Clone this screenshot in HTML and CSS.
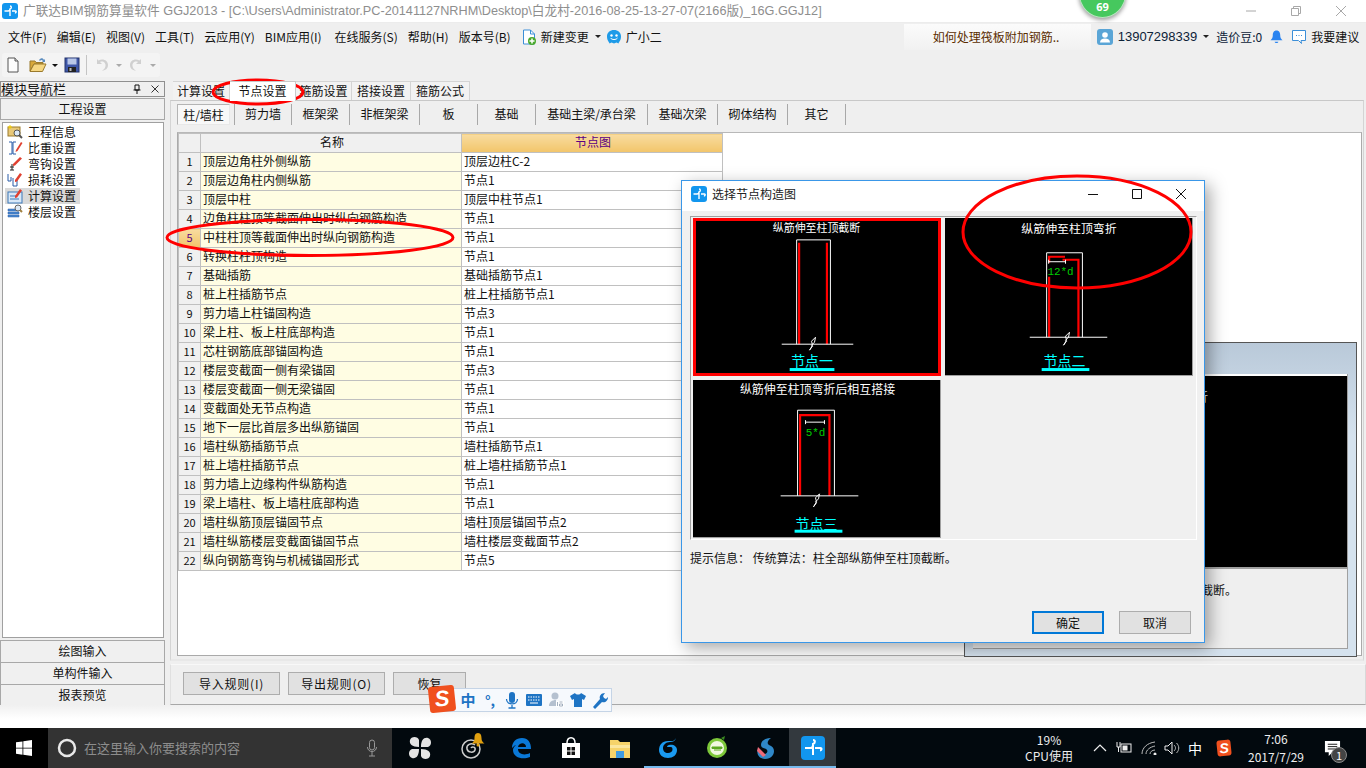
FILE: index.html
```html
<!DOCTYPE html>
<html lang="zh">
<head>
<meta charset="utf-8">
<title>广联达BIM钢筋算量软件</title>
<link rel="stylesheet" href="styles.css">
</head>
<body>
<div class="app">
  <header class="titlebar">
    <svg class="applogo" viewBox="0 0 16 16"><rect width="16" height="16" rx="3" fill="#1296ee"/><path d="M8 3c1.800 0 1.800 2.500 0 3v7M2.500 8H6c1.200 0 2-1 2-2.200M10 8h3.500c1 0 1 2-.6 2" fill="none" stroke="#fff" stroke-width="1.400"/></svg>
    <span class="apptitle">广联达BIM钢筋算量软件 GGJ2013 - [C:\Users\Administrator.PC-20141127NRHM\Desktop\白龙村-2016-08-25-13-27-07(2166版)_16G.GGJ12]</span>
    <div class="winctl">
      <svg viewBox="0 0 12 12"><path d="M1 6h10" stroke="#a8a8a8"/></svg>
      <svg viewBox="0 0 12 12"><path d="M1.500 3.500h7v7h-7zM3.500 3.500v-2h7v7h-2" fill="none" stroke="#a8a8a8"/></svg>
      <svg viewBox="0 0 12 12"><path d="M1 1l10 10M11 1L1 11" stroke="#a8a8a8"/></svg>
    </div>
  </header>

  <nav class="menubar">
    <span>文件(F)</span><span>编辑(E)</span><span>视图(V)</span><span>工具(T)</span><span>云应用(Y)</span><span class="bim">BIM应用(I)</span><span>在线服务(S)</span><span>帮助(H)</span><span>版本号(B)</span>
    <span class="menuicon">
      <svg class="ic16" viewBox="0 0 16 16"><path d="M2.500 1h7l4 4v10h-11z" fill="#fff" stroke="#3c8fd8"/><path d="M9.500 1v4h4" fill="none" stroke="#3c8fd8"/><circle cx="11" cy="12" r="4" fill="#49a82c"/><path d="M11 9.500v5M8.500 12h5" stroke="#fff" stroke-width="1.500"/></svg>
      新建变更<i class="caret tight"></i>
    </span>
    <span class="menuicon xiao">
      <svg class="ic16" viewBox="0 0 16 16"><path d="M8 1c4 0 7 2.500 7 6.500 0 4-2 5-2.500 7l-2-1-2.500 1-2.500-1-2 1C3 12.500 1 11.500 1 7.500 1 3.500 4 1 8 1z" fill="#1e9be8"/><circle cx="5.500" cy="6.500" r="1.200" fill="#fff"/><circle cx="10.500" cy="6.500" r="1.200" fill="#fff"/><path d="M4.500 9c1.500 2 5.500 2 7 0" fill="none" stroke="#fff"/></svg>
      广小二
    </span>
    <div class="newsbox">如何处理筏板附加钢筋..</div>
    <div class="userbox">
      <svg class="ic16" viewBox="0 0 16 16"><rect width="16" height="16" rx="3" fill="#5aa5d6"/><circle cx="8" cy="6" r="2.800" fill="#fff"/><path d="M3 13.500c0-2.500 2-4 5-4s5 1.500 5 4z" fill="#fff"/></svg>
      <span class="phone">13907298339</span><i class="caret"></i>
      <span class="beans">造价豆:0</span>
      <svg class="bell" viewBox="0 0 14 16"><path d="M7 1c3 0 4 2.500 4 5 0 3 1 4 2.500 5.500H.5C2 10 3 9 3 6c0-2.500 1-5 4-5z" fill="#2a84f0"/><path d="M5 13h4c0 2-4 2-4 0z" fill="#2a84f0"/></svg>
      <svg class="ic16 chat" viewBox="0 0 16 16"><path d="M1.500 1.500h13v10H10l.5 3-3-3h-6z" fill="#fff" stroke="#3c8fd8"/><path d="M5 6.500h1M7.500 6.500h1M10 6.500h1" stroke="#3c8fd8"/></svg>
      <span>我要建议</span>
    </div>
  </nav>

  <div class="toolbar">
    <div class="toolgroup">
      <svg class="ic16" viewBox="0 0 16 16"><path d="M3 1h7l3 3v11H3z" fill="#fdfdfd" stroke="#555"/><path d="M10 1v3h3" fill="#ddd" stroke="#555"/></svg>
      <svg class="ic18" viewBox="0 0 18 16"><path d="M1 14V4h5l1 1.500h7V7H5l-4 7z" fill="#d9a93a" stroke="#9a7a2c"/><path d="M1 14.500L5 7h12l-3.500 7.500z" fill="#f6d782" stroke="#9a7a2c"/><path d="M10 3c2-2.500 4-2 5 0l1-1v3h-3l1-1c-1-1-2-1.500-3 0z" fill="#5c8dbf"/></svg>
      <i class="caret dark"></i>
      <svg class="ic16 save" viewBox="0 0 16 16"><rect x="1" y="1" width="14" height="14" fill="#3f57a8" stroke="#23336b"/><rect x="3.500" y="1.500" width="9" height="6" fill="#b9c7e8"/><rect x="4" y="10" width="8" height="5" fill="#222"/><rect x="5.500" y="11" width="2" height="3" fill="#bbb"/></svg>
      <i class="vsep"></i>
      <svg class="ic16" viewBox="0 0 16 16"><path d="M3 2v5h5L6 5c3-1.500 6 1 5.500 4-.3 2-1.500 3.500-3.500 4.500 4 0 6-2.500 6-5.500 0-4.500-5-7-9.500-4.500z" fill="#d0d0d0"/></svg>
      <i class="caret mute"></i>
      <svg class="ic16" viewBox="0 0 16 16"><path d="M13 2v5H8l2-2C7 3.500 4 6 4.500 9c.3 2 1.500 3.500 3.500 4.500-4 0-6-2.500-6-5.500 0-4.500 5-7 9.500-4.500z" fill="#d0d0d0"/></svg>
      <i class="caret mute"></i>
    </div>
  </div>

  <main class="workspace">
    <aside class="sidebar">
      <div class="navhead"><span>模块导航栏</span>
        <span class="navctl">
          <svg viewBox="0 0 10 10"><path d="M3 1h4v5H3zM1.500 6h7M5 6v4" fill="none" stroke="#111"/></svg>
          <svg viewBox="0 0 10 10"><path d="M1.500 1.500l7 7M8.500 1.500l-7 7" stroke="#333"/></svg>
        </span>
      </div>
      <div class="navbtn first">工程设置</div>
      <ul class="navlist">
        <li><svg class="ic16" viewBox="0 0 16 16"><rect x="1" y="3" width="12" height="9" fill="#e8c878" stroke="#9a7a2c"/><path d="M3 1v4M1 3h4" stroke="#f4d000"/><circle cx="10" cy="9" r="3" fill="#dbe8f5" stroke="#555"/><path d="M12 11l3 3" stroke="#555" stroke-width="2"/></svg>工程信息</li>
        <li><svg class="ic16" viewBox="0 0 16 16"><path d="M2 2h3v12H2M9 2H6v12h3" fill="none" stroke="#2a5da8"/><path d="M9 10l5-8 1.500 1-5 8-2 1z" fill="#e04030"/></svg>比重设置</li>
        <li><svg class="ic16" viewBox="0 0 16 16"><path d="M5 8v6M3 14h4M3 11h4" stroke="#222"/><path d="M6 8l7-7 2 1.500-7 7-2 .5z" fill="#e04030"/></svg>弯钩设置</li>
        <li><svg class="ic16" viewBox="0 0 16 16"><path d="M1 2v7h3V5M6 6v8h4v-6" fill="none" stroke="#2a5da8"/><path d="M8 8l5-7 2 1.500-5 7-2 .5z" fill="#e04030"/></svg>损耗设置</li>
        <li class="sel"><svg class="ic16" viewBox="0 0 16 16"><rect x="1" y="4" width="14" height="11" fill="#d8e8f8" stroke="#3c78b8"/><path d="M3 8h6M3 11h9" stroke="#3c78b8"/><path d="M8 8l5-7 2 1.500-5 7-2 .5z" fill="#e04030"/></svg>计算设置</li>
        <li><svg class="ic16" viewBox="0 0 16 16"><path d="M1 5h11v2H1zM1 8h11v2H1zM1 11h11v2H1z" fill="#4a88d0" stroke="#2a5da8" stroke-width=".5"/><circle cx="11" cy="4" r="3" fill="#dce8f5" stroke="#666"/><path d="M13 6l2 2" stroke="#a08040" stroke-width="2"/></svg>楼层设置</li>
      </ul>
      <div class="navbtn">绘图输入</div>
      <div class="navbtn">单构件输入</div>
      <div class="navbtn">报表预览</div>
    </aside>

    <section class="content">
      <div class="tabs">
        <span class="tab w1">计算设置</span><span class="tab on w2">节点设置</span><span class="tab w3">箍筋设置</span><span class="tab w4">搭接设置</span><span class="tab w5">箍筋公式</span>
      </div>
      <div class="tabpanel">
        <div class="subtabs">
          <span class="stab pressed w53">柱/墙柱</span><span class="stab w58 lead">剪力墙</span><span class="stab w58">框架梁</span><span class="stab w70">非框架梁</span><span class="stab w58">板</span><span class="stab w58">基础</span><span class="stab w112">基础主梁/承台梁</span><span class="stab w70">基础次梁</span><span class="stab w70">砌体结构</span><span class="stab w58">其它</span>
        </div>
        <div class="gridbox">
          <table class="grid">
            <colgroup><col class="c0"><col class="c1"><col class="c2"></colgroup>
            <thead><tr><th class="idx"></th><th>名称</th><th class="hot">节点图</th></tr></thead>
            <tbody>
              <tr><td class="idx">1</td><td class="nm">顶层边角柱外侧纵筋</td><td>顶层边柱C-2</td></tr>
              <tr><td class="idx">2</td><td class="nm">顶层边角柱内侧纵筋</td><td>节点1</td></tr>
              <tr><td class="idx">3</td><td class="nm">顶层中柱</td><td>顶层中柱节点1</td></tr>
              <tr><td class="idx">4</td><td class="nm">边角柱柱顶等截面伸出时纵向钢筋构造</td><td>节点1</td></tr>
              <tr><td class="idx cur">5</td><td class="nm">中柱柱顶等截面伸出时纵向钢筋构造</td><td>节点1</td></tr>
              <tr><td class="idx">6</td><td class="nm">转换柱柱顶构造</td><td>节点1</td></tr>
              <tr><td class="idx">7</td><td class="nm">基础插筋</td><td>基础插筋节点1</td></tr>
              <tr><td class="idx">8</td><td class="nm">桩上柱插筋节点</td><td>桩上柱插筋节点1</td></tr>
              <tr><td class="idx">9</td><td class="nm">剪力墙上柱锚固构造</td><td>节点3</td></tr>
              <tr><td class="idx">10</td><td class="nm">梁上柱、板上柱底部构造</td><td>节点1</td></tr>
              <tr><td class="idx">11</td><td class="nm">芯柱钢筋底部锚固构造</td><td>节点1</td></tr>
              <tr><td class="idx">12</td><td class="nm">楼层变截面一侧有梁锚固</td><td>节点3</td></tr>
              <tr><td class="idx">13</td><td class="nm">楼层变截面一侧无梁锚固</td><td>节点1</td></tr>
              <tr><td class="idx">14</td><td class="nm">变截面处无节点构造</td><td>节点1</td></tr>
              <tr><td class="idx">15</td><td class="nm">地下一层比首层多出纵筋锚固</td><td>节点1</td></tr>
              <tr><td class="idx">16</td><td class="nm">墙柱纵筋插筋节点</td><td>墙柱插筋节点1</td></tr>
              <tr><td class="idx">17</td><td class="nm">桩上墙柱插筋节点</td><td>桩上墙柱插筋节点1</td></tr>
              <tr><td class="idx">18</td><td class="nm">剪力墙上边缘构件纵筋构造</td><td>节点1</td></tr>
              <tr><td class="idx">19</td><td class="nm">梁上墙柱、板上墙柱底部构造</td><td>节点1</td></tr>
              <tr><td class="idx">20</td><td class="nm">墙柱纵筋顶层锚固节点</td><td>墙柱顶层锚固节点2</td></tr>
              <tr><td class="idx">21</td><td class="nm">墙柱纵筋楼层变截面锚固节点</td><td>墙柱楼层变截面节点2</td></tr>
              <tr><td class="idx">22</td><td class="nm">纵向钢筋弯钩与机械锚固形式</td><td>节点5</td></tr>
            </tbody>
          </table>
        </div>
      </div>
      <div class="actions">
        <button class="btn b97">导入规则(I)</button><button class="btn b97">导出规则(O)</button><button class="btn b73">恢复</button>
      </div>
    </section>
  </main>
  <div class="gap"></div>

  <footer class="taskbar">
    <div class="start"><svg viewBox="0 0 16 16"><path d="M0 2.300l6.500-.9v6.300H0zM7.300 1.300L16 0v7.700H7.300zM0 8.500h6.500v6.200L0 13.800zM7.300 8.500H16V16l-8.700-1.200z" fill="#fff"/></svg></div>
    <div class="search">
      <svg class="cortana" viewBox="0 0 20 20"><circle cx="10" cy="10" r="8" fill="none" stroke="#e8e8e8" stroke-width="2.500"/></svg>
      <span class="stext">在这里输入你要搜索的内容</span>
      <svg class="mic" viewBox="0 0 12 18"><rect x="3.500" y="1" width="5" height="10" rx="2.500" fill="none" stroke="#999"/><path d="M1.500 8c0 6 9 6 9 0M6 13v4M3 17h6" fill="none" stroke="#999"/></svg>
    </div>
    <div class="apps">
      <span class="tb w51"><svg viewBox="0 0 24 24"><path d="M11 11C4 11 1 8 2 4s8-4 9 0zM13 11c0-7 3-10 7-9s4 8 0 9zM13 13c7 0 10 3 9 7s-8 4-9 0zM11 13c0 7-3 10-7 9s-4-8 0-9z" fill="#e4e4e4"/></svg></span>
      <span class="tb w51 rel"><svg viewBox="0 0 24 24"><circle cx="12" cy="13" r="9" fill="none" stroke="#ccc" stroke-width="1.500"/><path d="M16 9c-4-3-9 0-8 4s7 4 8 1-3-4-4-2" fill="none" stroke="#ccc" stroke-width="1.500"/></svg><svg class="minibell" viewBox="0 0 14 14"><path d="M7 0c3 0 3.500 3 3.500 5 0 3 1 4 3 5.500H.5C2.500 9 3.500 8 3.500 5 3.500 3 4 0 7 0z" fill="#e0a010"/><circle cx="7" cy="12" r="1.500" fill="#e0a010"/></svg></span>
      <span class="tb w50"><svg viewBox="0 0 24 24"><path d="M3 12C3 6 7 2 13 2c6 0 9 4.500 9 11H9c0 5 6 7 12 4v4c-7 3-17 1-17-7 0-2 1-3 3-5-1 0-2 1-4 3zm6-1h8c0-5-7-5-8 0z" fill="#0a78d7"/></svg></span>
      <span class="tb w50"><svg viewBox="0 0 24 24"><path d="M3 7h18v15H3z" fill="#fff"/><path d="M8 7c0-7 8-7 8 0" fill="none" stroke="#fff" stroke-width="1.500"/><path d="M8 11h3.500v3.500H8zM12.500 11H16v3.500h-3.500zM8 15.500h3.500V19H8zM12.500 15.500H16V19h-3.500z" fill="#111"/></svg></span>
      <span class="tb w48"><svg viewBox="0 0 24 24"><path d="M2 4h8l2 2h10v16H2z" fill="#f6d36a"/><path d="M2 9h20v3H2z" fill="#fbe69e"/><path d="M8 15h8v7H8z" fill="#3f9be0"/></svg></span>
      <span class="tb w48 open"><svg viewBox="0 0 24 24"><path d="M20 2c-2 4-4 3-8 3C6 5 3 9 3 14c0 5 4 8 9 8s9-3 9-8c0-4-4-6-8-5-1 .3-2 1-2 2h4c1 0 1.500 1 1.500 2.500 0 2-2 3.500-4.500 3.500-3 0-5-2-5-5 0-3 3-6 7-6 3 0 5-1 6-4z" fill="#1a9af0"/></svg></span>
      <span class="tb w49 open"><svg viewBox="0 0 24 24"><circle cx="12" cy="12" r="10" fill="#7dc83a"/><circle cx="12" cy="12" r="7" fill="#f0f8e0"/><path d="M7 11h10v1.500H7zM9 14h7" stroke="#5aa820" fill="#5aa820"/><path d="M16 2l4-2-1 4z" fill="#3a8a20"/></svg></span>
      <span class="tb w48 open"><svg viewBox="0 0 24 24"><path d="M18 2c-6 0-10 3-10 7 0 3 3 3 5 4s2 4-1 5c-3 1-6 0-7-5-2 5 1 10 7 10s9-4 9-8c0-3-2-5-5-6-2-1-2-4 2-7z" fill="#2f88c8"/><path d="M5 11l8 8-3 2-6-6z" fill="#ee6a78"/></svg></span>
      <span class="tb w47 open act"><svg viewBox="0 0 24 24"><rect width="24" height="24" rx="4" fill="#1296ee"/><path d="M12 4c2.500 0 2.500 3 0 4v11M4 12h5.500c1.500 0 2.500-1.500 2.500-3M14 12h5.500c1.500 0 1.500 2.500-.5 2.500" fill="none" stroke="#fff" stroke-width="2"/></svg></span>
    </div>
    <div class="tray">
      <div class="cpu"><span>19%</span><span>CPU使用</span></div>
      <svg class="t t1" viewBox="0 0 14 14"><path d="M1 10l6-6 6 6" fill="none" stroke="#eee" stroke-width="1.200"/></svg>
      <svg class="t t2" viewBox="0 0 16 14"><rect x="5" y="3" width="10" height="8" fill="none" stroke="#eee"/><rect x="6.500" y="4.500" width="5" height="5" fill="#eee"/><path d="M1 1v5h3V1M2.500 6v5" fill="none" stroke="#eee"/></svg>
      <svg class="t t3" viewBox="0 0 16 14"><path d="M1 13C1 7 6 2 14 1M5 13c0-4 4-7 9-8M9 13c0-2 2-4 5-4" fill="none" stroke="#bbb"/><circle cx="14" cy="13" r="1.500" fill="#eee"/></svg>
      <svg class="t t4" viewBox="0 0 16 14"><path d="M1 5h3l4-4v12l-4-4H1z" fill="none" stroke="#eee"/><path d="M10 4c2 2 2 4 0 6M12.500 2c3 3 3 7 0 10" fill="none" stroke="#bbb"/></svg>
      <span class="ime">中</span>
      <span class="slogo small">S</span>
      <div class="clock"><span>7:06</span><span>2017/7/29</span></div>
      <div class="notif">
        <svg viewBox="0 0 18 18"><path d="M1 1h16v12H9l-4 4v-4H1z" fill="#fff"/><path d="M4 4.500h10M4 7h10M4 9.500h10" stroke="#111"/></svg>
        <span class="nbadge">1</span>
      </div>
    </div>
  </footer>
</div>

<div class="preview">
  <div class="prevbox">
    <div class="prevblack">纵筋伸至柱顶弯折</div>
    <div class="prevcap">提示信息：传统算法：柱全部纵筋伸至柱顶截断。</div>
  </div>
</div>

<div class="dialog">
  <div class="dlghead">
    <svg class="ic16 dlglogo" viewBox="0 0 16 16"><rect width="16" height="16" rx="3" fill="#1296ee"/><path d="M8 3c1.800 0 1.800 2.500 0 3v7M2.500 8H6c1.200 0 2-1 2-2.200M10 8h3.500c1 0 1 2-.6 2" fill="none" stroke="#fff" stroke-width="1.400"/></svg>
    <span class="dlgtitle">选择节点构造图</span>
    <div class="dlgctl">
      <svg viewBox="0 0 12 12"><path d="M1 6.500h10" stroke="#111"/></svg>
      <svg viewBox="0 0 12 12"><path d="M1.500 1.500h9v9h-9z" fill="none" stroke="#111"/></svg>
      <svg viewBox="0 0 12 12"><path d="M1 1l10 10M11 1L1 11" stroke="#111"/></svg>
    </div>
  </div>
  <div class="dlgbody">
    <div class="cards">
      <svg class="card sel" viewBox="0 0 248 158">
        <text x="124" y="14" class="ct s11">纵筋伸至柱顶截断</text>
        <path d="M104 127V22h34v105" class="w"/>
        <path d="M106.500 25v102M134.500 25v102" class="r"/>
        <path d="M89 127h72" class="w"/>
        <path d="M117 133l3-5-1-4 4-4-1 5-3 3 1 1z" class="wt"/>
        <text x="119.500" y="149" class="cy">节点一</text>
        <rect x="97" y="151" width="45" height="3" class="cyb"/>
      </svg>
      <svg class="card" viewBox="0 0 248 158">
        <text x="124.500" y="15" class="ct s12">纵筋伸至柱顶弯折</text>
        <path d="M102 120V35h36v85" class="w"/>
        <path d="M104.500 120V59M104.500 45v-6h16M118 42h16v78" class="r"/>
        <path d="M85 120h78" class="w"/>
        <path d="M104 44h17M104 42v4M121 42v4" class="w"/>
        <text x="116" y="57" class="gr">12*d</text>
        <path d="M119 128l3-5-1-4 4-4-1 5-3 3 1 1z" class="wt"/>
        <text x="120" y="149" class="cy">节点二</text>
        <rect x="97" y="151" width="48" height="3" class="cyb"/>
      </svg>
      <svg class="card" viewBox="0 0 248 157">
        <text x="125" y="14" class="ct s12">纵筋伸至柱顶弯折后相互搭接</text>
        <path d="M105 116V30h37v86" class="w"/>
        <path d="M107.500 116V35h29.500v81" class="r"/>
        <path d="M88 116h78" class="w"/>
        <path d="M113 42h19M113 40v4M132 40v4" class="w"/>
        <text x="123" y="56" class="gr">5*d</text>
        <path d="M121 127l3-5-1-4 4-4-1 5-3 3 1 1z" class="wt"/>
        <text x="124" y="149" class="cy">节点三</text>
        <rect x="102" y="150" width="48" height="3" class="cyb"/>
      </svg>
    </div>
    <p class="hint">提示信息：&nbsp;传统算法：柱全部纵筋伸至柱顶截断。</p>
    <div class="dlgbtns"><button class="btn b72 def">确定</button><button class="btn b72">取消</button></div>
  </div>
</div>

<div class="imebar">
  <span class="slogo">S</span>
  <span class="imezh">中</span>
  <span class="imep">°,</span>
  <svg viewBox="0 0 16 18"><rect x="5" y="1" width="6" height="11" rx="3" fill="#1e74c4"/><path d="M2.500 8c0 6.500 11 6.500 11 0M8 14v3M4.500 17h7" fill="none" stroke="#1e74c4" stroke-width="1.300"/></svg>
  <svg viewBox="0 0 18 18"><rect x="1" y="3" width="16" height="12" rx="1" fill="#1e74c4"/><path d="M3 6h12M3 9h12" stroke="#fff" stroke-dasharray="1.500 1"/><path d="M5 12h8" stroke="#fff"/></svg>
  <svg viewBox="0 0 18 18"><circle cx="8" cy="5" r="3.500" fill="#b4c0cf"/><path d="M2 15c0-4 3-6 7-6v6z" fill="#b4c0cf"/><rect x="9" y="10" width="8" height="6" fill="#fff"/><path d="M10.500 11v4M12.500 11h3M12.500 13h3v2h-3z" stroke="#8d9db0" fill="none" stroke-width=".8"/></svg>
  <svg viewBox="0 0 18 18"><path d="M6 2L1 5l2 4 2-1v8h8V8l2 1 2-4-5-3c-1 2-5 2-6 0z" fill="#1e74c4"/></svg>
  <svg viewBox="0 0 18 18"><path d="M2 16l7-8c-1-3 1-6 5-6l-2 3 1 2 2 1 2-2c0 4-3 6-6 5l-7 7z" fill="#1e74c4"/></svg>
</div>

<div class="scorebadge"><span>69</span></div>

<svg class="marks" viewBox="0 0 1366 768">
  <ellipse cx="258" cy="92" rx="45" ry="12" class="m"/>
  <ellipse cx="310" cy="237.500" rx="143" ry="18" class="m"/>
  <ellipse cx="1077" cy="232" rx="114" ry="56" class="m"/>
</svg>
</body>
</html>
```
FILE: styles.css
```css
* { box-sizing: border-box; }
html, body { margin: 0; padding: 0; }
body {
  width: 1366px; height: 768px; overflow: hidden; position: relative;
  font: 12px/16px "Noto Sans CJK SC", "Liberation Sans", sans-serif;
  color: #111; background: #fff;
}
svg { display: block; flex: none; }
.app { display: flex; flex-direction: column; height: 768px; }
.ic16 { width: 16px; height: 16px; }
.ic18 { width: 18px; height: 16px; }

/* title */
.titlebar { height: 23px; display: flex; align-items: center; padding-left: 2px; background: #fff; border-bottom: 1px solid #ececec; }
.applogo { width: 16px; height: 16px; }
.apptitle { margin-left: 5px; font: 12.7px/20px "Liberation Sans", "Noto Sans CJK SC", sans-serif; color: #8e8e8e; white-space: nowrap; }
.winctl { margin-left: auto; display: flex; padding-right: 19px; gap: 33px; }
.winctl svg { width: 12px; height: 12px; }

/* menu */
.menubar { height: 27px; display: flex; align-items: center; padding-left: 8px; gap: 10px; background: #efefef; white-space: nowrap; }
.bim { margin-right: 3px; }
.menuicon { display: flex; align-items: center; gap: 4px; }
.xiao { margin-left: -5px; }
.caret { display: inline-block; width: 0; height: 0; border: 3px solid transparent; border-top: 3px solid #222; border-bottom: 0; margin-left: 6px; }
.caret.tight { margin-left: 2px; }
.caret.mute { border-top-color: #aaa; margin-left: 6px; }
.caret.dark { margin-left: 5px; border-top-color: #111; }
.newsbox { margin-left: 232px; width: 187px; height: 26px; padding-left: 29px; line-height: 26px; color: #5a2d00; background: linear-gradient(#fbfbfb, #f1f1f1); flex: none; }
.userbox { display: flex; align-items: center; margin-left: -4px; }
.phone { margin-left: 5px; font-family: "Liberation Sans", sans-serif; font-size: 13px; color: #0c2238; }
.beans { margin-left: 7px; color: #0c2238; }
.bell { width: 13px; height: 16px; margin-left: 8px; }
.chat { margin-left: 8px; margin-right: 4px; }

/* toolbar */
.toolbar { height: 30px; background: #efefef; padding: 3px 0 0 2px; }
.toolgroup { width: 158px; height: 24px; display: flex; align-items: center; padding-left: 3px; background: #f4f4f4; border-radius: 3px; }
.toolgroup .ic18 { margin-left: 8px; }
.save { margin-left: 6px; }
.vsep { width: 1px; height: 20px; background: #c4c4c4; margin: 0 7px 0 6px; }
.toolgroup .caret.mute + svg { margin-left: 6px; }

/* workspace */
.workspace { height: 625px; display: flex; background: #efefef; }
.sidebar { width: 165px; display: flex; flex-direction: column; }
.navhead { height: 16px; flex: none; margin-top: 1px; display: flex; justify-content: space-between; align-items: center; border: 1px solid #8f8f8f; font-size: 13px; line-height: 14px; background: #efefef; }
.navctl { display: flex; gap: 8px; padding-right: 4px; }
.navctl svg { width: 10px; height: 10px; }
.navbtn { height: 23px; flex: none; text-align: center; line-height: 20px; border: 1px solid #a8a8a8; margin-top: -1px; background: #f0f0f0; }
.navbtn.first { height: 22px; margin: 1px 0 0; line-height: 19px; }
.navlist { list-style: none; flex: none; margin: 2px 1px 2px 2px; padding: 1px 0 0 2px; height: 516px; background: #fff; border: 1px solid #a0a0a0; }
.navlist li { height: 16px; display: flex; align-items: center; gap: 5px; line-height: 16px; width: 75px; padding-left: 2px; }
.navlist li.sel { background: #d9d9d9; }
.sidebar > .navlist + .navbtn { margin-top: 0; }

/* content */
.content { flex: 1; margin-left: 5px; display: flex; flex-direction: column; min-width: 0; }
.tabs { height: 20px; display: flex; padding: 1px 0 0 3px; flex: none; }
.tab { height: 19px; border: 1px solid #d4d4d4; border-bottom: 0; border-left: 0; line-height: 18px; text-align: center; background: #f2f2f2; }
.tab.on { background: #fff; border-color: #c8c8c8; height: 20px; position: relative; z-index: 1; }
.w1 { width: 57px; } .w2 { width: 66px; } .w3 { width: 56px; } .w4 { width: 59px; } .w5 { width: 59px; }
.tabpanel { height: 561px; flex: none; border: 1px solid #d4d4d4; border-bottom: 2px solid #e8e8e8; margin-right: 2px; padding: 2px 0 3px 6px; border-top-color: #c8c8c8; display: flex; flex-direction: column; }
.subtabs { height: 22px; display: flex; flex: none; }
.stab { height: 21px; margin-top: 1px; line-height: 19px; text-align: center; border-right: 1px solid #a8a8a8; flex: none; }
.lead { border-left: 1px solid #a8a8a8; margin-left: 4px; }
.stab.pressed { background: #f8f8f8; border: 1px solid #b4b4b4; border-right-color: #e8e8e8; border-bottom-color: #e8e8e8; }
.w53 { width: 53px; } .w58 { width: 58px; } .w70 { width: 70px; } .w112 { width: 112px; }
.gridbox { margin: 7px 1px 0 0; flex: 1; background: #fff; border: 1px solid #aaa; border-top: 1px solid #b8b8b8; }
.grid { border-collapse: collapse; table-layout: fixed; width: 544px; font-size: 12px; }
.c0 { width: 22px; } .c1 { width: 261px; } .c2 { width: 261px; }
.grid th, .grid td { height: 19px; padding: 0 0 3px 2px; border: 1px solid #c0c0c0; font-weight: 400; line-height: 14px; white-space: nowrap; overflow: hidden; }
.grid th { text-align: center; background: #f0f0f0; }
.grid th.hot { background: linear-gradient(#f8dca0, #f2c56a); color: #5a0082; }
.grid .idx { background: #f0f0f0; text-align: center; padding: 0 0 3px; font-size: 11px; }
.grid .idx.cur { background: linear-gradient(#f8dca0, #f2c56a); color: #5a0082; }
.grid .nm { background: #fffde3; }

/* actions */
.actions { flex: none; margin-top: 3px; display: flex; gap: 8px; padding: 7px 0 0 12px; background: #efefef; border-top: 1px solid #f8f8f8; border-bottom: 1px solid #a8a8a8; border-right: 1px solid #d8d8d8; border-left: 1px solid #e0e0e0; height: 41px; }
.btn { height: 23px; padding: 0; font: 12px/19px "Noto Sans CJK SC", sans-serif; color: #111; background: #e1e1e1; border: 1px solid #adadad; }
.b97 { width: 97px; letter-spacing: .8px; } .b73 { width: 73px; } .b72 { width: 72px; }
.btn.def { border: 2px solid #0078d7; }

.gap { height: 23px; background: linear-gradient(#f0f0f0, #fff 60%); }

/* taskbar */
.taskbar { height: 40px; display: flex; background: #02090e; color: #fff; }
.start { width: 48px; background: #000; display: flex; align-items: center; justify-content: center; }
.start svg { width: 16px; height: 16px; }
.search { width: 344px; background: #333; display: flex; align-items: center; padding-left: 9px; }
.cortana { width: 20px; height: 20px; }
.stext { margin-left: 7px; color: #8d8d8d; font-size: 13px; }
.mic { width: 12px; height: 18px; margin-left: 126px; }
.apps { display: flex; width: 447px; padding-left: 2px; }
.tb { height: 40px; display: flex; align-items: center; justify-content: center; flex: none; }
.tb svg { width: 24px; height: 24px; }
.w51 { width: 51px; } .w50 { width: 50px; } .w48 { width: 48px; } .w49 { width: 49px; } .w47 { width: 47px; }
.rel { position: relative; }
.tb .minibell { position: absolute; width: 14px; height: 14px; left: 26px; top: 5px; }
.open { box-shadow: inset 0 -2px 0 #76b9ed; }
.act { background: #33393e; }
.tray { flex: 1; display: flex; align-items: center; position: relative; min-width: 0; }
.cpu { width: 70px; margin-left: 175px; display: flex; flex-direction: column; align-items: center; line-height: 16px; font-size: 12px; color: #eee; }
.t1 { width: 14px; height: 14px; margin-left: 9px; }
.t2 { width: 16px; height: 14px; margin-left: 9px; }
.t3 { width: 16px; height: 14px; margin-left: 9px; }
.t4 { width: 16px; height: 14px; margin-left: 7px; }
.ime { margin-left: 8px; font-size: 14px; width: 14px; }
.slogo { display: flex; align-items: center; justify-content: center; width: 26px; height: 26px; background: #f0501e; color: #fff; font: italic 700 22px/26px "Liberation Sans", sans-serif; border-radius: 3px; transform: rotate(-6deg); flex: none; }
.slogo.small { width: 14px; height: 16px; font-size: 14px; line-height: 16px; margin-left: 15px; }
.clock { width: 70px; margin-left: 10px; display: flex; flex-direction: column; align-items: center; font-size: 12px; line-height: 18px; color: #eee; }
.notif { position: relative; margin-left: 13px; width: 30px; }
.notif svg { width: 17px; height: 17px; }
.nbadge { position: absolute; left: 7px; top: 7px; width: 16px; height: 16px; border-radius: 50%; background: #444; border: 1px solid #888; font-size: 11px; line-height: 14px; text-align: center; }

/* floating preview behind dialog */
.preview { position: absolute; left: 964px; top: 342px; width: 393px; height: 315px; padding: 31px 8px 7px 8px; border: 1px solid #555; background: linear-gradient(#b9c9d9, #d5e2ee 30%, #d5e2ee); }
.prevbox { height: 275px; display: flex; flex-direction: column; background: #efefef; border-right: 1px solid #a0a0a0; border-bottom: 1px solid #a0a0a0; }
.prevblack { height: 195px; flex: none; padding: 13px 0 0 139px; color: #fff; background: #000; border-top: 2px solid #fff; border-bottom: 2px solid #a0a0a0; }
.prevcap { padding: 13px 0 0 0; white-space: nowrap; }

/* dialog */
.dialog { position: absolute; left: 681px; top: 180px; width: 524px; height: 463px; background: #f0f0f0; border: 1px solid #3a97e8; box-shadow: 5px 5px 16px rgba(0,0,0,.35); display: flex; flex-direction: column; }
.dlghead { height: 30px; background: #fff; display: flex; align-items: center; padding: 0 0 4px 9px; flex: none; }
.dlglogo { margin-right: 5px; }
.dlgtitle { font-size: 12px; color: #222; }
.dlgctl { margin-left: auto; display: flex; gap: 32px; padding-right: 17px; }
.dlgctl svg { width: 12px; height: 12px; }
.dlgbody { flex: 1; display: flex; flex-direction: column; padding: 5px 8px 8px 8px; }
.cards { width: 507px; height: 324px; border: 1px solid #a0a0a0; border-right-color: #fff; border-bottom-color: #fff; padding: 1px 0 0 2px; display: grid; grid-template-columns: 248px 248px; grid-auto-rows: 158px; column-gap: 4px; row-gap: 4px; flex: none; }
.card { width: 248px; height: 158px; background: #000; border-bottom: 1px solid #a0a0a0; border-right: 1px solid #a0a0a0; }
.card.sel { outline: 3px solid #f00; outline-offset: -3px; }
.ct { fill: #fff; text-anchor: middle; font-family: "Noto Sans CJK SC", sans-serif; }
.s11 { font-size: 11px; } .s12 { font-size: 12px; }
.w { fill: none; stroke: #fff; stroke-width: 1; }
.r { fill: none; stroke: #f00; stroke-width: 2.200; }
.wt { fill: none; stroke: #fff; stroke-width: 1; }
.cy { fill: #0ff; text-anchor: middle; font-size: 14px; font-family: "Noto Sans CJK SC", sans-serif; }
.cyb { fill: #0ff; }
.gr { fill: #0c0; text-anchor: middle; font-size: 11px; font-family: "Liberation Mono", monospace; }
.hint { margin: 10px 0 0 0; height: 16px; white-space: nowrap; }
.dlgbtns { margin-top: auto; display: flex; justify-content: flex-end; gap: 15px; padding-right: 5px; }

/* ime bar */
.imebar { position: absolute; left: 432px; top: 688px; width: 180px; height: 24px; display: flex; align-items: center; gap: 4px; padding-left: 26px; background: #f6f9fd; border: 1px solid #c5d4e6; }
.imebar .slogo { position: absolute; left: -4px; top: -3px; }
.imebar svg { width: 18px; height: 18px; }
.imezh { color: #1e74c4; font-size: 15px; font-weight: 700; width: 18px; text-align: center; }
.imep { color: #1e74c4; font-weight: 700; font-size: 14px; width: 18px; text-align: center; }

/* score */
.scorebadge { position: absolute; left: 1079px; top: -30px; width: 47px; height: 48px; border-radius: 50%; background: #46c85e; border: 1px solid #b9e4c0; box-shadow: 0 2px 4px rgba(0,0,0,.4); display: flex; align-items: flex-end; justify-content: center; color: #fff; font: 700 11px/14px "Noto Sans", sans-serif; }
.scorebadge span { margin-bottom: 3px; }

.marks { position: absolute; left: 0; top: 0; width: 1366px; height: 768px; pointer-events: none; }
.m { fill: none; stroke: #f00; stroke-width: 3; }
```
